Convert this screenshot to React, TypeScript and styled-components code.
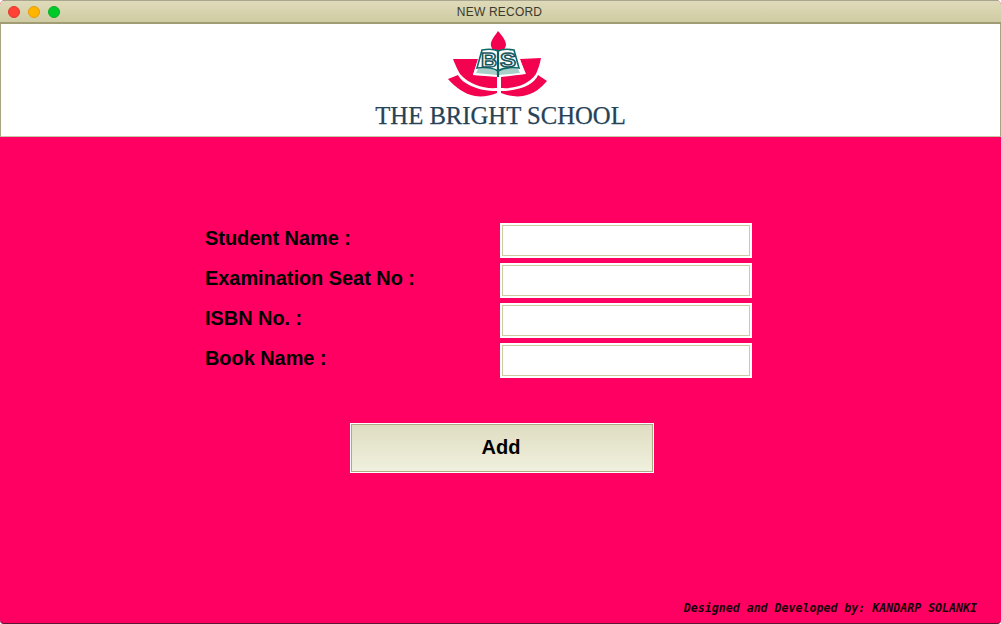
import styled, { createGlobalStyle } from "styled-components";

const GlobalStyle = createGlobalStyle`
  html, body {
    margin: 0;
    padding: 0;
    background: #ffffff;
  }
`;

const Window = styled.div`
  width: 1001px;
  height: 624px;
  box-sizing: border-box;
  display: flex;
  flex-direction: column;
  overflow: hidden;
  border-radius: 5px 5px 4px 4px;
  background: #ff0062;
  border-bottom: 1px solid #5e1732;
`;

const TitleBar = styled.div`
  height: 24px;
  flex: none;
  box-sizing: border-box;
  position: relative;
  display: flex;
  align-items: center;
  justify-content: center;
  padding: 1px 2px 0 0;
  background: linear-gradient(#dfdbba, #cfcba2);
  border-top: 1px solid #a8a68e;
  border-bottom: 2px solid #a09c76;
`;

const Lights = styled.div`
  position: absolute;
  left: 8px;
  top: 5px;
  display: flex;
  gap: 8px;
`;

const Light = styled.span<{ $color: string; $edge: string }>`
  width: 12px;
  height: 12px;
  box-sizing: border-box;
  border-radius: 50%;
  background: ${(p) => p.$color};
  border: 1px solid ${(p) => p.$edge};
`;

const Title = styled.span`
  font-family: "Liberation Sans", Arial, sans-serif;
  font-size: 12px;
  line-height: 14px;
  color: #3c3a2c;
  letter-spacing: 0.2px;
`;

const Header = styled.header`
  height: 113px;
  flex: none;
  box-sizing: border-box;
  display: flex;
  flex-direction: column;
  align-items: center;
  background: #ffffff;
  border-left: 1px solid #a8a482;
  border-right: 1px solid #a8a482;
  border-bottom: 1px solid #c9c5a5;
`;

const Logo = styled.svg`
  display: block;
  margin: 1px 6px 0 0;
  width: 115px;
  height: 75px;
  flex: none;
`;

const SchoolName = styled.div`
  font-family: "Liberation Serif", "Times New Roman", serif;
  font-size: 24.7px;
  line-height: 30px;
  margin-top: 1px;
  color: #264257;
  white-space: nowrap;
  -webkit-text-stroke: 0.25px #264257;
`;

const Main = styled.main`
  flex: 1;
  display: flex;
  flex-direction: column;
  box-sizing: border-box;
  padding: 86px 24px 8px 205px;
`;

const Form = styled.form`
  display: flex;
  flex-direction: column;
  gap: 5px;
`;

const Row = styled.div`
  display: flex;
  align-items: flex-start;
  height: 35px;
`;

const Label = styled.label`
  width: 295px;
  flex: none;
  font-family: "Liberation Sans", Arial, sans-serif;
  font-weight: 700;
  font-size: 19.9px;
  line-height: 30px;
  color: #000000;
`;

const Input = styled.input`
  width: 252px;
  height: 35px;
  box-sizing: border-box;
  padding: 0 4px;
  background: #ffffff;
  border: 2px solid #ffffff;
  box-shadow: inset 0 0 0 1px #cdc9a3;
  outline: none;
`;

const AddButton = styled.button`
  align-self: flex-start;
  margin: 40px 0 0 145px;
  width: 304px;
  height: 50px;
  box-sizing: border-box;
  border: 1px solid #ffffff;
  box-shadow: inset 0 0 0 1px #aeaa88;
  background: linear-gradient(#dfddc1, #f0f1df);
  font-family: "Liberation Sans", Arial, sans-serif;
  font-weight: 700;
  font-size: 20px;
  color: #000000;
  padding: 0 2px 2px 0;
`;

const Credit = styled.div`
  margin-top: auto;
  align-self: flex-end;
  font-family: "DejaVu Sans Mono", "Liberation Mono", monospace;
  font-style: italic;
  font-weight: 700;
  font-size: 11.6px;
  line-height: 14px;
  color: #14000a;
`;

const LogoLetter = styled.text`
  font-family: "Liberation Sans", Arial, sans-serif;
  font-weight: 700;
  font-size: 20px;
  fill: #ffffff;
  stroke: #17585f;
  stroke-width: 1.5px;
  text-anchor: middle;
`;

const fields = [
  "Student Name :",
  "Examination Seat No :",
  "ISBN No. :",
  "Book Name :",
];

function SchoolLogo() {
  return (
    <Logo viewBox="0 0 115 75">
      <g fill="#f2024f">
        <path d="M58 6 C54 12 50 16 51 21 C52 25 55 28 58 30 C61 28 65 25 66 20 C66 15 62 11 58 6 Z" />
        <path d="M13 34 L38 34 L33 50 L57 52 L57 63 C44 64 30 60 20 49 C17 44 15 39 13 34 Z" />
        <path d="M101 33 L80 34 L85 49 L61 52 L61 63 C74 64 88 60 96 49 C98 44 100 39 101 33 Z" />
        <path d="M8 54 L18 50 C22 58 36 66 57 66 L57 68 C50 71 42 72 35 71 C24 69 15 62 8 54 Z" />
        <path d="M107 56 L98 50 C95 58 82 66 61 66 L61 68 C68 71 76 72 83 71 C94 69 101 63 107 56 Z" />
      </g>
      <path d="M41 25 L76 25 L86 49 L59 51 L57 51 L33 50 Z" fill="#ffffff" />
      <path d="M38 44 C45 42 52 43 57 46 L57 50 L36 48 Z" fill="#a9cfc8" />
      <path d="M78 44 C71 42 64 43 59 46 L59 50 L80 48 Z" fill="#a9cfc8" />
      <path
        d="M42 25 C48 24 54 24 58 26 C62 24 68 24 74 25 L79 43 C71 42 63 43 58 46 C53 43 45 42 37 43 Z"
        fill="#ffffff"
        stroke="#0e6a69"
        strokeWidth="1.6"
      />
      <path d="M58 26 L58 52" stroke="#0e5f60" strokeWidth="2.2" fill="none" />
      <LogoLetter x="49" y="42" textLength="16" lengthAdjust="spacingAndGlyphs">B</LogoLetter>
      <LogoLetter x="68" y="42" textLength="16" lengthAdjust="spacingAndGlyphs">S</LogoLetter>
    </Logo>
  );
}

export default function App() {
  return (
    <>
      <GlobalStyle />
      <Window>
        <TitleBar>
          <Lights>
            <Light $color="#ff4136" $edge="#e5392c" />
            <Light $color="#ffb400" $edge="#e59f05" />
            <Light $color="#00ca2a" $edge="#05b026" />
          </Lights>
          <Title>NEW RECORD</Title>
        </TitleBar>
        <Header>
          <SchoolLogo />
          <SchoolName>THE BRIGHT SCHOOL</SchoolName>
        </Header>
        <Main>
          <Form>
            {fields.map((field) => (
              <Row key={field}>
                <Label>{field}</Label>
                <Input type="text" />
              </Row>
            ))}
            <AddButton type="button">Add</AddButton>
          </Form>
          <Credit>Designed and Developed by: KANDARP SOLANKI</Credit>
        </Main>
      </Window>
    </>
  );
}
